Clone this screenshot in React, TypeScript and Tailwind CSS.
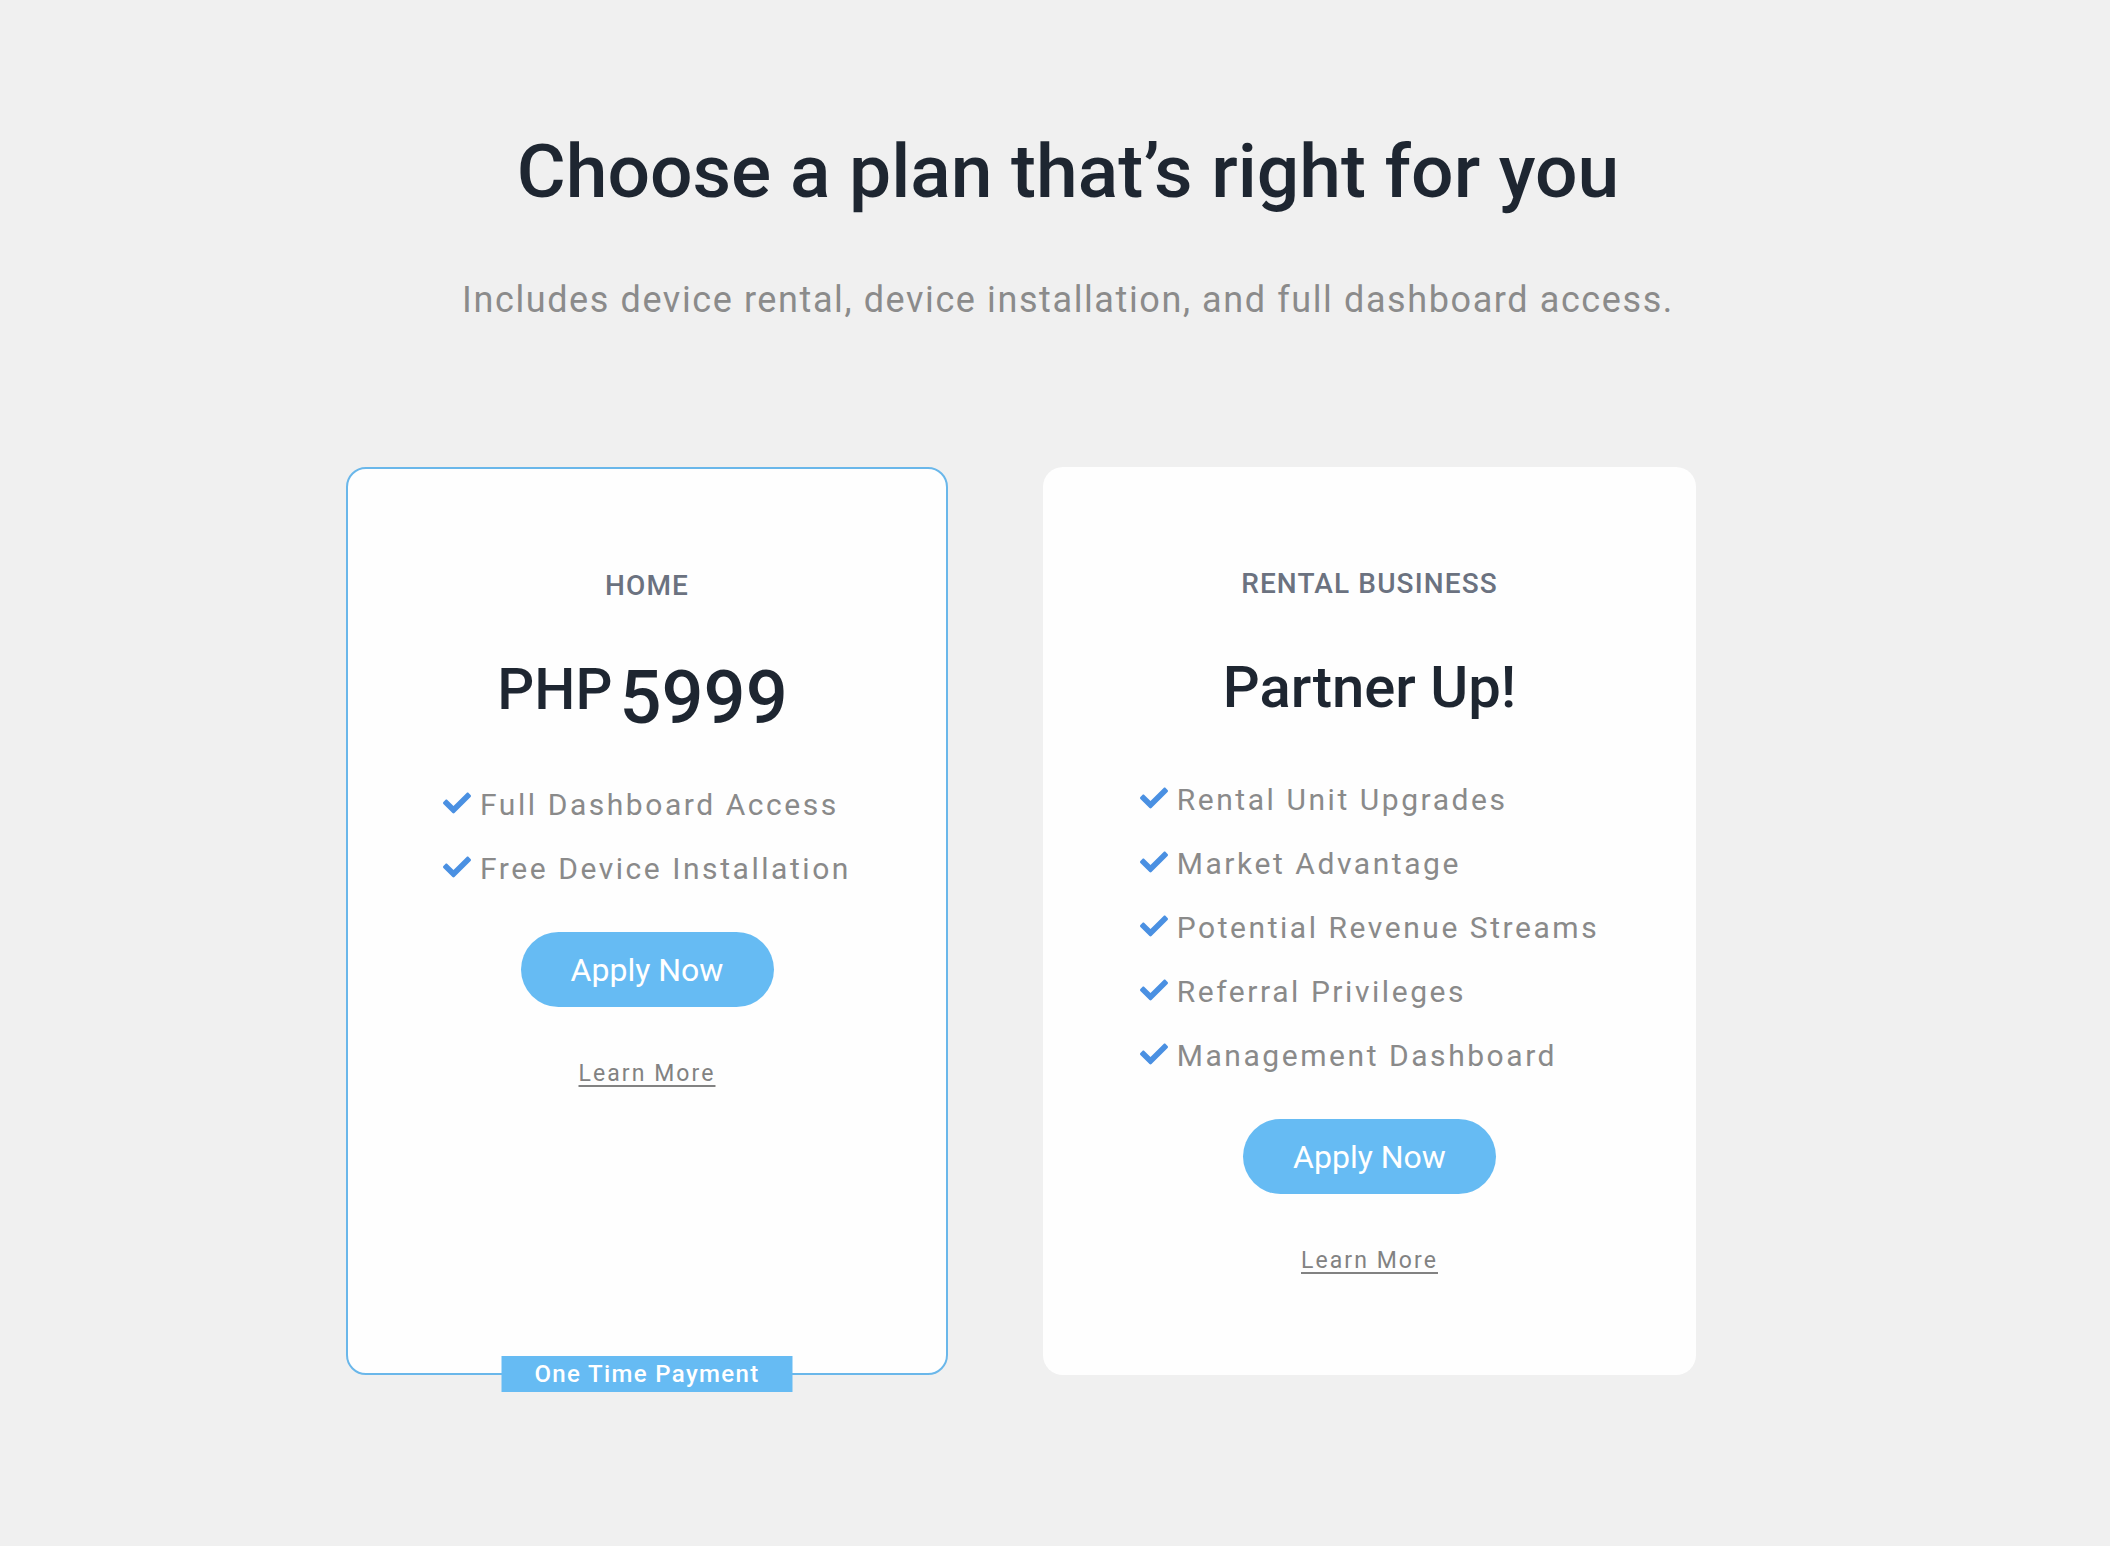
import React from 'react';
import { FaCheck } from 'react-icons/fa';

const homeFeatures = ['Full Dashboard Access', 'Free Device Installation'];

const businessFeatures = [
  'Rental Unit Upgrades',
  'Market Advantage',
  'Potential Revenue Streams',
  'Referral Privileges',
  'Management Dashboard',
];

const FeatureList = ({ items }: { items: string[] }) => (
  <ul className="mt-[47px] flex flex-col items-start self-center">
    {items.map((item) => (
      <li key={item} className="flex h-[64px] items-center gap-[9px]">
        <FaCheck size={28} className="mb-[5px] shrink-0 text-[#4a90e2]" />
        <span className="text-[30px] leading-[64px] tracking-[0.085em] text-[#8a8a8a]">{item}</span>
      </li>
    ))}
  </ul>
);

const CardActions = () => (
  <div className="mt-[31px] flex flex-col items-center">
    <button className="h-[75px] w-[253px] rounded-full bg-[#66bbf3] text-[32px] text-white">
      Apply Now
    </button>
    <a
      href="#"
      className="mt-[53px] text-[23px] leading-[28px] tracking-[0.09em] text-[#828282] underline decoration-[1.5px] underline-offset-[4px]"
    >
      Learn More
    </a>
  </div>
);

export default function App() {
  return (
    <div className="min-h-screen bg-[#f0f0f0] pb-[150px] font-['Roboto',sans-serif]">
      <header className="pl-[26px] pt-[126px] text-center">
        <h1 className="text-[75px] font-medium leading-[90px] text-[#1e2631]">
          Choose a plan that’s right for you
        </h1>
        <p className="mt-[62px] text-[36px] leading-[44px] tracking-[1.6px] text-[#8b8b8b]">
          Includes device rental, device installation, and full dashboard access.
        </p>
      </header>

      <div className="mt-[145px] flex items-stretch gap-[95px] pl-[346px]">
        {/* home plan */}
        <div className="relative flex w-[602px] flex-col items-center rounded-[20px] border-2 border-[#6ab7ea] bg-[#fefefe] pt-[100px] pb-[100px]">
          <h3 className="text-[28px] font-medium leading-[34px] tracking-[0.04em] text-[#6b7280]">HOME</h3>
          <div className="mt-[52px] flex h-[71px] items-start gap-[7px] pr-[9px] text-[#1e2631]">
            <span className="text-[58px] font-medium leading-[68px]">PHP</span>
            <span className="mt-[6px] text-[74px] font-medium leading-[74px]">5999</span>
          </div>
          <FeatureList items={homeFeatures} />
          <CardActions />
          <div className="absolute bottom-[-19px] left-1/2 flex h-[36px] w-[291px] -translate-x-1/2 items-center justify-center bg-[#66bbf3] text-[24px] font-medium tracking-[1.35px] text-white">
            One Time Payment
          </div>
        </div>

        {/* rental business plan */}
        <div className="flex w-[653px] flex-col items-center rounded-[20px] bg-[#fefefe] pt-[100px] pb-[100px]">
          <h3 className="text-[28px] font-medium leading-[34px] tracking-[0.04em] text-[#6b7280]">
            RENTAL BUSINESS
          </h3>
          <h2 className="mt-[52px] text-[58px] font-medium leading-[68px] text-[#1e2631]">Partner Up!</h2>
          <FeatureList items={businessFeatures} />
          <CardActions />
        </div>
      </div>
    </div>
  );
}
